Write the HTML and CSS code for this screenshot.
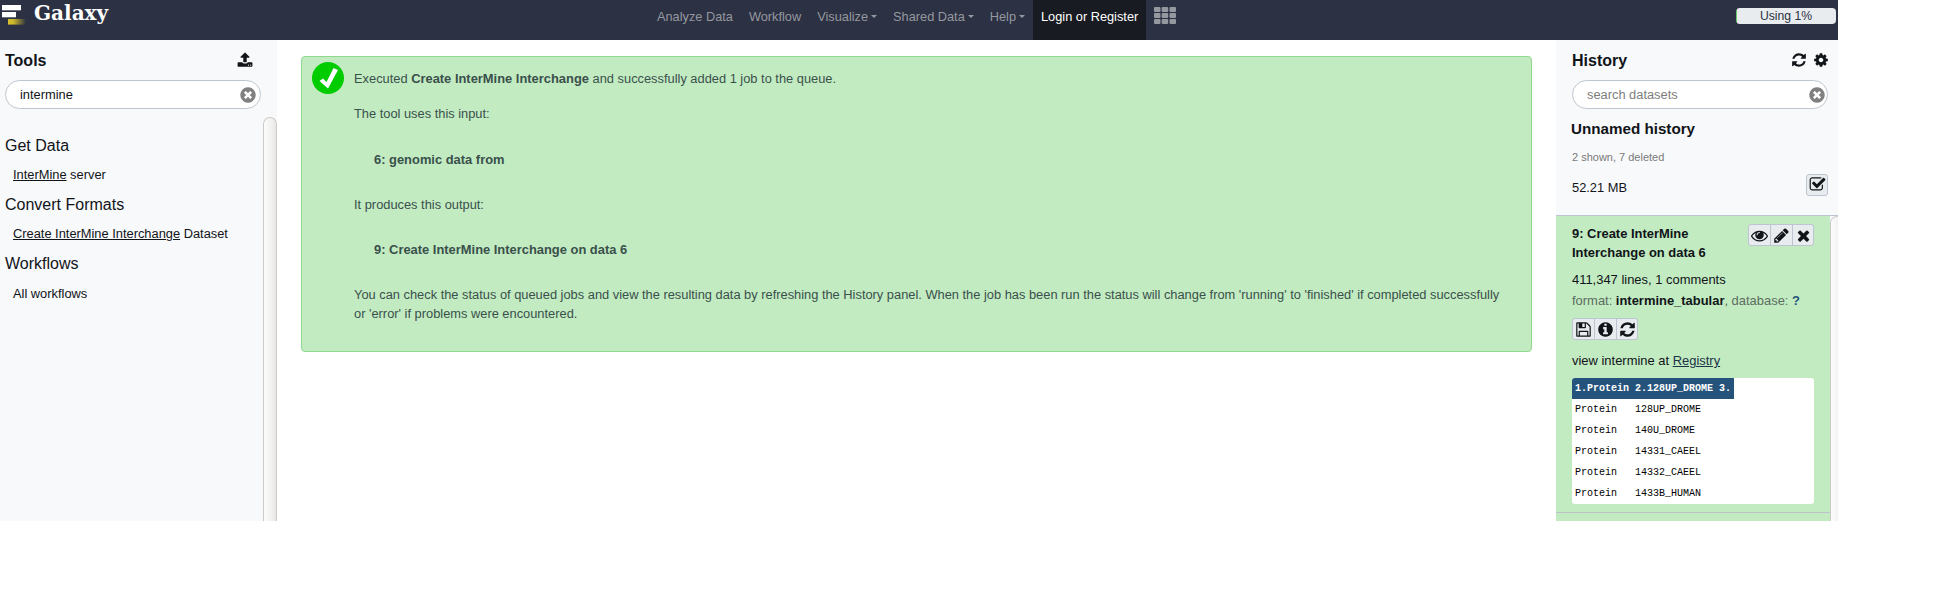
FILE: index.html
```html
<!DOCTYPE html>
<html lang="en">
<head>
<meta charset="utf-8">
<title>Galaxy</title>
<link rel="stylesheet" href="styles.css">
</head>
<body>
<svg class="sprite" aria-hidden="true">
  <symbol id="refresh" viewBox="0 0 1792 1792"><path d="M1639 1056q0 5-1 7-64 268-268 434.500t-478 166.500q-146 0-282.500-55t-243.500-157l-129 129q-19 19-45 19t-45-19-19-45v-448q0-26 19-45t45-19h448q26 0 45 19t19 45-19 45l-137 137q71 66 161 102t187 36q134 0 250-65t186-179q11-17 53-117 8-23 30-23h192q13 0 22.500 9.500t9.500 22.500zm25-800v448q0 26-19 45t-45 19h-448q-26 0-45-19t-19-45 19-45l138-138q-148-137-349-137-134 0-250 65t-186 179q-11 17-53 117-8 23-30 23h-199q-13 0-22.500-9.500t-9.500-22.500v-7q65-268 270-434.500t480-166.500q146 0 284 55.500t245 156.500l130-129q19-19 45-19t45 19 19 45z"/></symbol>
  <symbol id="cog" viewBox="0 0 1792 1792"><path d="M1152 896q0-106-75-181t-181-75-181 75-75 181 75 181 181 75 181-75 75-181zm512-109v222q0 12-8 23t-20 13l-185 28q-19 54-39 91 35 50 107 138 10 12 10 25t-9 23q-27 37-99 108t-94 71q-12 0-26-9l-138-108q-44 23-91 38-16 136-29 186-7 28-36 28h-222q-14 0-24.500-8.500t-11.500-21.500l-28-184q-49-16-90-37l-141 107q-10 9-25 9-14 0-25-11-126-114-165-168-7-10-7-23 0-12 8-23 15-21 51-66.500t54-70.500q-27-50-41-99l-183-27q-13-2-21-12.500t-8-23.500v-222q0-12 8-23t19-13l186-28q14-46 39-92-40-57-107-138-10-12-10-24 0-10 9-23 26-36 98.500-107.500t94.500-71.500q13 0 26 10l138 107q44-23 91-38 16-136 29-186 7-28 36-28h222q14 0 24.500 8.500t11.500 21.500l28 184q49 16 90 37l142-107q9-9 24-9 13 0 25 10 129 119 165 170 7 8 7 22 0 12-8 23-15 21-51 66.500t-54 70.500q26 50 41 98l183 28q13 2 21 12.500t8 23.500z"/></symbol>
  <symbol id="clear" viewBox="0 0 1792 1792"><path d="M1277 1122q0-26-19-45l-181-181 181-181q19-19 19-45 0-27-19-46l-90-90q-19-19-46-19-26 0-45 19l-181 181-181-181q-19-19-45-19-27 0-46 19l-90 90q-19 19-19 46 0 26 19 45l181 181-181 181q-19 19-19 45 0 27 19 46l90 90q19 19 46 19 26 0 45-19l181-181 181 181q19 19 45 19 27 0 46-19l90-90q19-19 19-46zm387-226q0 209-103 385.500t-279.500 279.500-385.500 103-385.500-103-279.500-279.500-103-385.500 103-385.500 279.500-279.500 385.500-103 385.500 103 279.500 279.500 103 385.500z"/></symbol>
  <symbol id="times" viewBox="0 0 1792 1792"><path d="M1490 1322q0 40-28 68l-136 136q-28 28-68 28t-68-28l-294-294-294 294q-28 28-68 28t-68-28l-136-136q-28-28-28-68t28-68l294-294-294-294q-28-28-28-68t28-68l136-136q28-28 68-28t68 28l294 294 294-294q28-28 68-28t68 28l136 136q28 28 28 68t-28 68l-294 294 294 294q28 28 28 68z"/></symbol>
  <symbol id="eye" viewBox="0 0 1792 1792"><path d="M1664 960q-152-236-381-353 61 104 61 225 0 185-131.500 316.500t-316.500 131.500-316.500-131.500-131.500-316.500q0-121 61-225-229 117-381 353 133 205 333.500 326.500t434.500 121.500 434.500-121.500 333.500-326.500zm-720-384q0-20-14-34t-34-14q-125 0-214.500 89.500t-89.500 214.500q0 20 14 34t34 14 34-14 14-34q0-86 61-147t147-61q20 0 34-14t14-34zm848 384q0 34-20 69-140 230-376.500 368.500t-499.500 138.500-499.500-139-376.500-368q-20-35-20-69t20-69q140-229 376.500-368t499.500-139 499.500 139 376.500 368q20 35 20 69z"/></symbol>
  <symbol id="pencil" viewBox="0 0 1792 1792"><path d="M491 1536l91-91-235-235-91 91v107h128v128h107zm523-928q0-22-22-22-10 0-17 7l-542 542q-7 7-7 17 0 22 22 22 10 0 17-7l542-542q7-7 7-17zm-54-192l416 416-832 832h-416v-416zm683 96q0 53-37 90l-166 166-416-416 166-165q36-38 90-38 53 0 91 38l235 234q37 39 37 91z"/></symbol>
  <symbol id="info" viewBox="0 0 1792 1792"><path d="M1152 1376v-160q0-14-9-23t-23-9h-96v-512q0-14-9-23t-23-9h-320q-14 0-23 9t-9 23v160q0 14 9 23t23 9h96v320h-96q-14 0-23 9t-9 23v160q0 14 9 23t23 9h448q14 0 23-9t9-23zm-128-896v-160q0-14-9-23t-23-9h-192q-14 0-23 9t-9 23v160q0 14 9 23t23 9h192q14 0 23-9t9-23zm640 416q0 209-103 385.500t-279.500 279.500-385.500 103-385.500-103-279.500-279.500-103-385.500 103-385.500 279.500-279.500 385.500-103 385.500 103 279.500 279.500 103 385.500z"/></symbol>
  <symbol id="save" viewBox="0 0 1792 1792"><path d="M512 1536h768v-384h-768v384zm896 0h128v-896q0-14-10-38.500t-20-34.500l-281-281q-10-10-34-20t-39-10v416q0 40-28 68t-68 28h-576q-40 0-68-28t-28-68v-416h-128v1280h128v-416q0-40 28-68t68-28h832q40 0 68 28t28 68v416zm-384-928v-320q0-13-9.500-22.500t-22.500-9.500h-192q-13 0-22.500 9.500t-9.500 22.500v320q0 13 9.500 22.500t22.500 9.500h192q13 0 22.500-9.500t9.500-22.500zm640 32v928q0 40-28 68t-68 28h-1344q-40 0-68-28t-28-68v-1344q0-40 28-68t68-28h928q40 0 88 20t76 48l280 280q28 28 48 76t20 88z"/></symbol>
  <symbol id="check" viewBox="0 0 1792 1792"><path d="M1472 930v318q0 119-84.500 203.500t-203.500 84.500h-832q-119 0-203.500-84.500t-84.500-203.500v-832q0-119 84.500-203.500t203.500-84.500h832q63 0 117 25 15 7 18 23 3 17-9 29l-49 49q-10 10-23 10-3 0-9-2-23-6-45-6h-832q-66 0-113 47t-47 113v832q0 66 47 113t113 47h832q66 0 113-47t47-113v-254q0-13 9-22l64-64q10-10 23-10 6 0 12 3 20 8 20 29zm231-489l-814 814q-24 24-57 24t-57-24l-430-430q-24-24-24-57t24-57l110-110q24-24 57-24t57 24l263 263 647-647q24-24 57-24t57 24l110 110q24 24 24 57t-24 57z"/></symbol>
  <symbol id="upload" viewBox="0 0 1792 1792"><path d="M1344 1472q0-26-19-45t-45-19-45 19-19 45 19 45 45 19 45-19 19-45zm256 0q0-26-19-45t-45-19-45 19-19 45 19 45 45 19 45-19 19-45zm128-224v320q0 40-28 68t-68 28h-1472q-40 0-68-28t-28-68v-320q0-40 28-68t68-28h427q21 56 70.500 92t110.500 36h256q61 0 110.500-36t70.500-92h427q40 0 68 28t28 68zm-325-648q-17 40-59 40h-256v448q0 26-19 45t-45 19h-256q-26 0-45-19t-19-45v-448h-256q-42 0-59-40-17-39 14-69l448-448q18-19 45-19t45 19l448 448q31 30 14 69z"/></symbol>
</svg>

<div class="app">
  <header class="masthead">
    <div class="brand">
      <svg class="logo" width="26" height="26" viewBox="0 0 26 26">
        <defs><linearGradient id="gold"><stop offset="0" stop-color="#d8c12c"/><stop offset=".3" stop-color="#c9b62c"/><stop offset="1" stop-color="#2c3143"/></linearGradient></defs>
        <rect x="2" y="5" width="19" height="5.300" fill="#fff"/>
        <rect x="2" y="12" width="14" height="5.300" fill="#fff"/>
        <rect x="8" y="19" width="18" height="5.600" fill="url(#gold)"/>
      </svg>
      <span class="brand-name">Galaxy</span>
    </div>
    <nav class="nav">
      <a class="nav-item">Analyze Data</a>
      <a class="nav-item">Workflow</a>
      <a class="nav-item caret">Visualize</a>
      <a class="nav-item caret">Shared Data</a>
      <a class="nav-item caret">Help</a>
      <a class="nav-item active">Login or Register</a>
      <a class="nav-grid"><svg width="22" height="17" viewBox="0 0 22 17"><g><rect width="6.500" height="5" rx="1"/><rect x="7.700" width="6.500" height="5" rx="1"/><rect x="15.500" width="6.500" height="5" rx="1"/><rect y="6" width="6.500" height="5" rx="1"/><rect x="7.700" y="6" width="6.500" height="5" rx="1"/><rect x="15.500" y="6" width="6.500" height="5" rx="1"/><rect y="12" width="6.500" height="5" rx="1"/><rect x="7.700" y="12" width="6.500" height="5" rx="1"/><rect x="15.500" y="12" width="6.500" height="5" rx="1"/></g></svg></a>
    </nav>
    <div class="quota">Using 1%</div>
  </header>

  <div class="columns">
    <aside class="tools">
      <div class="panel-head"><h2>Tools</h2><svg class="icon"><use href="#upload"/></svg></div>
      <div class="search"><span>intermine</span><svg class="icon-clear"><use href="#clear"/></svg></div>
      <div class="tool-body">
        <div class="tool-list">
          <h3>Get Data</h3>
          <p><u>InterMine</u> server</p>
          <h3>Convert Formats</h3>
          <p><u>Create InterMine Interchange</u> Dataset</p>
          <h3>Workflows</h3>
          <p>All workflows</p>
        </div>
        <div class="scrollbar"></div>
      </div>
    </aside>

    <main class="center">
      <div class="message">
        <svg class="done" width="32" height="32" viewBox="0 0 32 32"><circle cx="16" cy="16" r="16" fill="#0c0"/><path d="M7.500 19l3.500-2.500 3.500 3.500L21.500 6l4.500 2L16 26.500z" fill="#fff"/></svg>
        <div class="message-text">
          <p class="lead">Executed <b>Create InterMine Interchange</b> and successfully added 1 job to the queue.</p>
          <p>The tool uses this input:</p>
          <p class="dataset">6: genomic data from</p>
          <p>It produces this output:</p>
          <p class="dataset">9: Create InterMine Interchange on data 6</p>
          <p class="note">You can check the status of queued jobs and view the resulting data by refreshing the History panel. When the job has been run the status will change from 'running' to 'finished' if completed successfully or 'error' if problems were encountered.</p>
        </div>
      </div>
    </main>

    <aside class="history">
      <div class="history-controls">
        <div class="panel-head"><h2>History</h2><div class="head-icons"><svg class="icon"><use href="#refresh"/></svg><svg class="icon"><use href="#cog"/></svg></div></div>
        <div class="search placeholder"><span>search datasets</span><svg class="icon-clear"><use href="#clear"/></svg></div>
        <div class="history-name">Unnamed history</div>
        <div class="history-count">2 shown, 7 deleted</div>
        <div class="history-size"><span>52.21 MB</span><div class="buttons"><span class="button check"><svg class="icon"><use href="#check"/></svg></span></div></div>
      </div>
      <div class="history-body">
        <div class="datasets">
          <section class="item">
            <div class="item-head">
              <div class="item-title">9: Create InterMine Interchange on data 6</div>
              <div class="buttons">
                <span class="button"><svg class="icon"><use href="#eye"/></svg></span>
                <span class="button"><svg class="icon"><use href="#pencil"/></svg></span>
                <span class="button"><svg class="icon"><use href="#times"/></svg></span>
              </div>
            </div>
            <p class="blurb">411,347 lines, 1 comments</p>
            <p class="format">format: <b>intermine_tabular</b>, database: <b class="db">?</b></p>
            <div class="buttons actions">
              <span class="button"><svg class="icon"><use href="#save"/></svg></span>
              <span class="button"><svg class="icon"><use href="#info"/></svg></span>
              <span class="button"><svg class="icon"><use href="#refresh"/></svg></span>
            </div>
            <p class="display">view intermine at <u>Registry</u></p>
            <div class="peek">
              <div class="peek-head">1.Protein 2.128UP_DROME 3.</div>
              <div class="peek-row"><span>Protein</span><span>128UP_DROME</span></div>
              <div class="peek-row"><span>Protein</span><span>140U_DROME</span></div>
              <div class="peek-row"><span>Protein</span><span>14331_CAEEL</span></div>
              <div class="peek-row"><span>Protein</span><span>14332_CAEEL</span></div>
              <div class="peek-row"><span>Protein</span><span>1433B_HUMAN</span></div>
            </div>
          </section>
        </div>
        <div class="scrollbar"></div>
      </div>
    </aside>
  </div>
</div>
</body>
</html>
```
FILE: styles.css
```css
* { box-sizing: border-box; }
body {
  margin: 0;
  background: #fff;
  color: #111418;
  font: 12.85px/19.2px "Liberation Sans", Arial, sans-serif;
}
h2, h3, p { margin: 0; }
.sprite { display: none; }
.app { width: 1838px; height: 521px; overflow: hidden; display: flex; flex-direction: column; }

.masthead {
  height: 40px;
  flex: none;
  display: grid;
  grid-template-columns: 649px 1fr auto;
  background: #2c3143;
}
.brand { display: flex; gap: 8px; }
.brand-name {
  color: #fff;
  font: bold 20px/26px "DejaVu Serif", serif;
}
.nav { display: flex; font-size: 12.78px; }
.nav-item { padding: 7px 8px 0; color: #95989f; white-space: nowrap; }
.nav-item.active { background: #191b22; color: #fff; }
.caret::after {
  content: "";
  display: inline-block;
  margin-left: 3px;
  vertical-align: 3px;
  border: 3px solid transparent;
  border-top-color: currentColor;
  border-bottom: 0;
}
.nav-grid { padding: 7px 8px 0; line-height: 0; }
.nav-grid g { fill: #95989f; }
.quota {
  width: 100px;
  height: 16px;
  margin: 8px 2px 0 0;
  border-radius: 4px;
  background: linear-gradient(90deg, #66cc66 1px, #e9ecef 1px);
  color: #2c3143;
  font-size: 12.2px;
  line-height: 16px;
  text-align: center;
}

.columns { flex: 1; min-height: 0; display: grid; grid-template-columns: 277px 1fr 282px; }
.tools, .history { background: #f8f9fb; display: flex; flex-direction: column; min-height: 0; }
.panel-head { height: 40px; flex: none; display: flex; align-items: center; justify-content: space-between; }
.panel-head h2 { padding-top: 2px; font-size: 16px; line-height: 24px; }
.icon { width: 16px; height: 16px; fill: #111418; display: block; }
.head-icons { display: flex; gap: 6px; margin-right: -1px; }
.search {
  height: 29px;
  flex: none;
  display: flex;
  align-items: center;
  justify-content: space-between;
  padding: 0 3px 0 14px;
  border: 1px solid #bdc6d0;
  border-radius: 15px;
  background: #fff;
}
.placeholder { padding: 0 1px 0 14px; color: #7d7d7d; }
.placeholder .icon-clear { margin-top: 1px; }
.icon-clear { width: 18px; height: 18px; fill: #808080; }

.tools .panel-head { padding: 0 24px 0 5px; }
.tools .search { margin: 0 16px 0 5px; }
.tool-body { flex: 1; margin-top: 8px; display: flex; min-height: 0; }
.tool-list { flex: 1; padding: 16.600px 0 0 5px; }
.tool-list h3 { font-size: 16px; line-height: 24px; font-weight: 400; }
.tool-list p { padding: 7.700px 0 8.300px 8px; }
.scrollbar {
  width: 14px;
  flex: none;
  border: 1px solid #cdcac8;
  border-bottom: 0;
  border-radius: 7px 7px 0 0;
  background: linear-gradient(90deg, #fcfcfc, #f3f2f1 60%, #e8e6e4);
}

.center { padding: 16px 24px; }
.message {
  display: flex;
  width: 1231px;
  height: 296px;
  padding: 12px 31px 12px 10px;
  border: 1px solid #90d890;
  border-radius: 4px;
  background: #c2ebc2;
  color: #3a504b;
}
.done { flex: none; margin: -7px 10px 0 0; }
.message-text { display: flex; flex-direction: column; gap: 26px; }
.message-text .lead { margin-bottom: -10px; }
.message-text b, .dataset { font-size: 12.92px; }
.dataset { padding-left: 20px; font-weight: bold; }
.lead + p { margin-bottom: .4px; }
.note { margin-top: -.4px; }

.history-controls { flex: none; height: 175px; padding: 0 10px 0 16px; }
.history-name { margin: 8px 0 0 -1px; font-size: 15.2px; line-height: 23px; font-weight: bold; }
.history-count { margin-top: 9px; font-size: 11px; line-height: 16.5px; color: #7a7a7a; }
.history-size { margin-top: 8.500px; display: flex; justify-content: space-between; }
.history-size > span { padding-top: 4px; }
.buttons { display: flex; flex: none; height: 22px; }
.button {
  width: 22px;
  padding-top: 1.500px;
  border: 1px solid #bdc6d0;
  border-left-width: 0;
  background: #e9ecef;
  display: flex;
  justify-content: center;
}
.button .icon { flex: none; width: 17px; height: 17px; }
.button:first-child { width: 23px; border-left-width: 1px; border-radius: 3px 0 0 3px; }
.button:last-child { width: 21px; border-radius: 0 3px 3px 0; }
.button.check { width: 22px; padding-top: 1px; border-radius: 3px; }
.history-body { flex: 1; min-height: 0; display: flex; overflow: hidden; border-top: 1px solid #bdc6d0; }
.history-body .scrollbar { margin-right: -6px; }
.datasets { width: 274px; flex: none; background: #c2ebc2; }
.item { padding: 8px 16px 8px; border-bottom: 1px solid #bdc1cc; }
.item-head { display: flex; justify-content: space-between; }
.item-title { width: 150px; font-size: 12.95px; font-weight: bold; }
.blurb { margin-top: 8px; font-size: 12.95px; }
.format { margin-top: 1.600px; color: #5d6b60; font-size: 12.95px; white-space: nowrap; }
.format b { color: #111418; }
.format .db { color: #25537b; }
.actions { margin-top: 8px; }
.display { margin-top: 10.800px; font-size: 12.95px; }
.display u { color: #1c3346; }
.peek {
  margin-top: 7.800px;
  height: 126px;
  overflow: hidden;
  border-radius: 3px;
  background: #fff;
  color: #000;
  font: 10px/21px "Liberation Mono", monospace;
}
.peek-head { width: 162px; padding: 0 3px; background: #25537b; color: #fff; font-weight: bold; white-space: pre; }
.peek-row { display: grid; grid-template-columns: 60px 1fr; padding-left: 3px; }
```
